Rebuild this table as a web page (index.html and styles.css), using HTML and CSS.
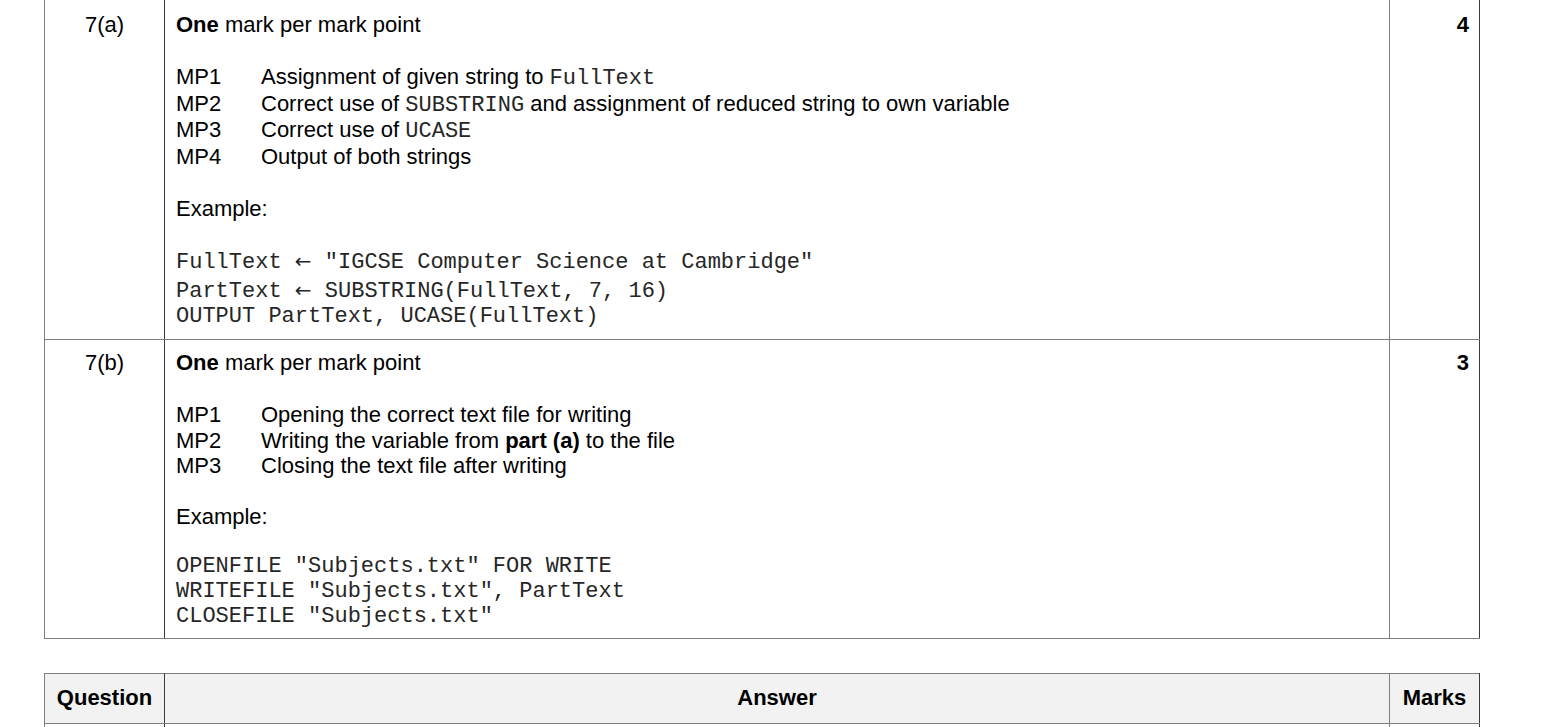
FILE: index.html
```html
<!DOCTYPE html>
<html lang="en">
<head>
  <meta charset="UTF-8">
  <meta name="viewport" content="width=device-width, initial-scale=1.0">
  <title>Mark Scheme - Question 7</title>
  <link rel="stylesheet" href="styles.css">
</head>
<body>
  <!-- Question 7 marking rows -->
  <table class="scheme-table scheme-top">
    <colgroup>
      <col class="col-question">
      <col class="col-answer">
      <col class="col-marks">
    </colgroup>
    <tr class="part-row part-a">
      <td class="question-cell">7(a)</td>
      <td class="answer-cell">
        <p><b>One</b> mark per mark point</p>
        <div class="mp-list mp-list-code">
          <div class="mp"><span class="mp-label">MP1</span><span>Assignment of given string to <code>FullText</code></span></div>
          <div class="mp"><span class="mp-label">MP2</span><span>Correct use of <code>SUBSTRING</code> and assignment of reduced string to own variable</span></div>
          <div class="mp"><span class="mp-label">MP3</span><span>Correct use of <code>UCASE</code></span></div>
          <div class="mp"><span class="mp-label">MP4</span><span>Output of both strings</span></div>
        </div>
        <p class="example-label">Example:</p>
        <div class="code-block code-a">
          <div class="code-line first">FullText <span class="arrow">←</span> "IGCSE Computer Science at Cambridge"</div>
          <div class="code-line">PartText <span class="arrow">←</span> SUBSTRING(FullText, 7, 16)</div>
          <div class="code-line">OUTPUT PartText, UCASE(FullText)</div>
        </div>
      </td>
      <td class="marks-cell">4</td>
    </tr>
    <tr class="part-row part-b">
      <td class="question-cell">7(b)</td>
      <td class="answer-cell">
        <p><b>One</b> mark per mark point</p>
        <div class="mp-list">
          <div class="mp"><span class="mp-label">MP1</span><span>Opening the correct text file for writing</span></div>
          <div class="mp"><span class="mp-label">MP2</span><span>Writing the variable from <b>part (a)</b> to the file</span></div>
          <div class="mp"><span class="mp-label">MP3</span><span>Closing the text file after writing</span></div>
        </div>
        <p class="example-label">Example:</p>
        <div class="code-block code-b">
          <div class="code-line">OPENFILE "Subjects.txt" FOR WRITE</div>
          <div class="code-line">WRITEFILE "Subjects.txt", PartText</div>
          <div class="code-line">CLOSEFILE "Subjects.txt"</div>
        </div>
      </td>
      <td class="marks-cell">3</td>
    </tr>
  </table>

  <!-- Next page header -->
  <table class="scheme-table scheme-next">
    <colgroup>
      <col class="col-question">
      <col class="col-answer">
      <col class="col-marks">
    </colgroup>
    <tr class="header-row">
      <th class="head-left">Question</th>
      <th>Answer</th>
      <th class="head-right">Marks</th>
    </tr>
    <tr class="empty-row">
      <td></td>
      <td></td>
      <td class="marks-cell"></td>
    </tr>
  </table>
</body>
</html>
```

FILE: styles.css
```css
:root {
  --line-grey: #7f7f7f;
  --line-dark: #3a3a3a;
  --header-bg: #f2f2f2;
  --text-color: #000;
}

* {
  box-sizing: border-box;
  margin: 0;
  padding: 0;
}

body {
  font-family: "Liberation Sans", Arial, sans-serif;
  font-size: 22px;
  color: var(--text-color);
  background-color: white;
  overflow: hidden;
}

.scheme-table {
  width: 1435px;
  margin-left: 44px;
  border-collapse: collapse;
  table-layout: fixed;
}

.scheme-top {
  margin-top: -1px;
}

.scheme-next {
  margin-top: 34px;
}

.col-question {
  width: 120px;
}

.col-answer {
  width: 1225px;
}

.col-marks {
  width: 90px;
}

.scheme-table td,
.scheme-table th {
  border: 1px solid var(--line-grey);
  vertical-align: top;
}

.scheme-table td:first-child,
.scheme-table th:first-child {
  border-right-color: var(--line-dark);
}

.scheme-table td:last-child,
.scheme-table th:last-child {
  border-right-color: var(--line-dark);
}

.question-cell {
  text-align: center;
  line-height: 26px;
}

.part-a td {
  padding-top: 12px;
  padding-bottom: 10px;
}

.part-b td {
  padding-top: 10px;
  padding-bottom: 9px;
}

.answer-cell {
  padding-left: 11px;
  padding-right: 11px;
  line-height: 26px;
}

.marks-cell {
  text-align: right;
  padding-right: 10px;
  font-weight: bold;
  line-height: 26px;
}

.mp-list {
  margin-top: 26px;
}

.mp {
  display: flex;
  line-height: 25.5px;
}

.mp-list-code .mp {
  line-height: 26.5px;
}

.mp-label {
  width: 85px;
  flex-shrink: 0;
}

code {
  font-family: "Liberation Mono", "Courier New", monospace;
  font-size: 22px;
  line-height: 0;
  color: #262626;
}

.part-a .example-label {
  margin-top: 26px;
}

.part-b .example-label {
  margin-top: 25px;
}

.code-block {
  font-family: "Liberation Mono", "Courier New", monospace;
  font-size: 22px;
  line-height: 25px;
  color: #262626;
}

.code-line {
  white-space: pre;
}

.code-a {
  margin-top: 28px;
}

.code-b {
  margin-top: 24px;
}

.code-line.first {
  margin-bottom: 4px;
}

.arrow {
  font-family: "DejaVu Sans", sans-serif;
  font-size: 20px;
  line-height: 0;
}

.header-row th {
  background-color: var(--header-bg);
  font-weight: bold;
  text-align: center;
  vertical-align: middle;
  height: 50px;
  line-height: 26px;
}

.empty-row td {
  height: 60px;
}
```
